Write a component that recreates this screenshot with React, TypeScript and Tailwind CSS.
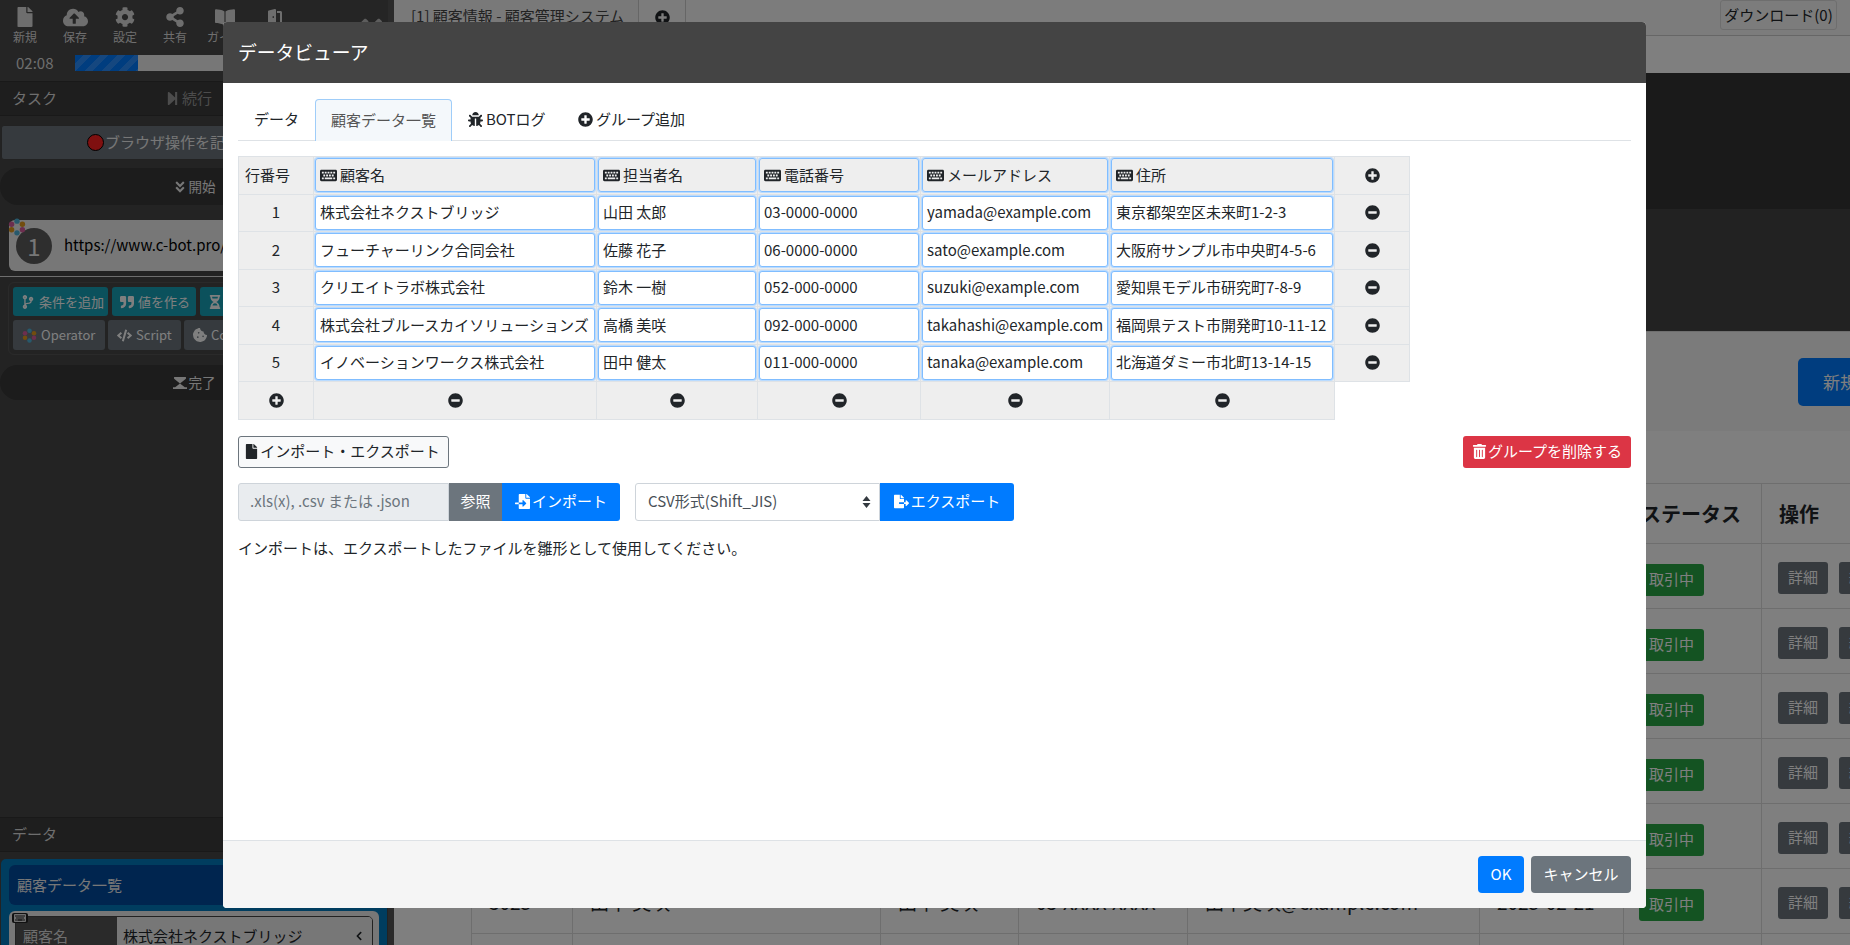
import type { ReactNode } from "react";
import {
  FaAngleDoubleDown,
  FaAngleDoubleLeft,
  FaBookOpen,
  FaBug,
  FaChevronLeft,
  FaCloudUploadAlt,
  FaCode,
  FaCodeBranch,
  FaCog,
  FaCookieBite,
  FaDoorOpen,
  FaFile,
  FaFileExport,
  FaFileImport,
  FaHourglassHalf,
  FaKeyboard,
  FaMinusCircle,
  FaPlusCircle,
  FaQuoteRight,
  FaShareAlt,
  FaStepForward,
  FaTrashAlt,
} from "react-icons/fa";

const customers = [
  ["株式会社ネクストブリッジ", "山田 太郎", "03-0000-0000", "yamada@example.com", "東京都架空区未来町1-2-3"],
  ["フューチャーリンク合同会社", "佐藤 花子", "06-0000-0000", "sato@example.com", "大阪府サンプル市中央町4-5-6"],
  ["クリエイトラボ株式会社", "鈴木 一樹", "052-000-0000", "suzuki@example.com", "愛知県モデル市研究町7-8-9"],
  ["株式会社ブルースカイソリューションズ", "高橋 美咲", "092-000-0000", "takahashi@example.com", "福岡県テスト市開発町10-11-12"],
  ["イノベーションワークス株式会社", "田中 健太", "011-000-0000", "tanaka@example.com", "北海道ダミー市北町13-14-15"],
];

const columns = ["顧客名", "担当者名", "電話番号", "メールアドレス", "住所"];

const toolbar = [
  { label: "新規", icon: <FaFile /> },
  { label: "保存", icon: <FaCloudUploadAlt className="text-[25px]" /> },
  { label: "設定", icon: <FaCog /> },
  { label: "共有", icon: <FaShareAlt /> },
  { label: "ガイド", icon: <FaBookOpen /> },
  { label: "終了", icon: <FaDoorOpen /> },
];

const backRows = ["3020", "3021", "3022", "3023", "3024", "3025"];

function OperatorLogo({ size }: { size: number }) {
  return (
    <svg width={size} height={size} viewBox="0 0 20 20" className="shrink-0">
      <circle cx="10" cy="3.5" r="3" fill="#4fb3d9" />
      <circle cx="16" cy="7" r="3" fill="#e59a1c" />
      <circle cx="16" cy="13" r="3" fill="#d85c9c" />
      <circle cx="10" cy="16.5" r="3" fill="#4fb3d9" />
      <circle cx="4" cy="13" r="3" fill="#e59a1c" />
      <circle cx="4" cy="7" r="3" fill="#d85c9c" />
    </svg>
  );
}

function TealButton({ icon, children, width }: { icon: ReactNode; children: ReactNode; width: string }) {
  return (
    <div className={`${width} flex h-[29px] shrink-0 items-center gap-[4px] rounded-[3px] bg-[#17a2b8] pl-[8px] text-[13px] text-white`}>
      {icon}
      <span>{children}</span>
    </div>
  );
}

function GreyButton({ icon, children, width }: { icon: ReactNode; children: ReactNode; width: string }) {
  return (
    <div className={`${width} flex h-[30px] shrink-0 items-center gap-[4px] rounded-[3px] bg-[#6c757d] pl-[9px] text-[13px] text-white`}>
      {icon}
      <span>{children}</span>
    </div>
  );
}

function Sidebar() {
  return (
    <aside className="flex h-full w-[394px] shrink-0 flex-col overflow-hidden border-r-[6px] border-[#555] bg-[#474747] text-white">
      <div className="flex h-[82px] shrink-0 flex-col border-b border-[#333] bg-[#4a4a4a]">
        <div className="flex h-[52px] shrink-0 pt-[6px]">
          {toolbar.map((t) => (
            <div key={t.label} className="flex w-[50px] shrink-0 flex-col items-center text-[#ddd]">
              <div className="flex h-[22px] items-center text-[20px]">{t.icon}</div>
              <span className="mt-px text-[12px] leading-[16px]">{t.label}</span>
            </div>
          ))}
          <div className="ml-[50px] mt-[6px] text-[36px] leading-none text-[#bbb]">
            <FaAngleDoubleLeft />
          </div>
        </div>
        <div className="flex h-[22px] items-center pl-[16px]">
          <span className="w-[59px] text-[15px] text-[#ddd]">02:08</span>
          <div className="h-[16px] w-[300px] bg-[#eee]">
            <div className="h-full w-[63px] bg-[repeating-linear-gradient(135deg,#007bff_0,#007bff_6px,#2a8fff_6px,#2a8fff_12px)]" />
          </div>
        </div>
      </div>
      <div className="flex h-[34px] shrink-0 items-center border-b border-[#333] bg-[#3c3c3c] pl-[12px] text-[15px] text-[#ddd]">
        <span className="w-[153px]">タスク</span>
        <span className="flex items-center gap-[2px] text-[#999]">
          <FaStepForward className="text-[15px]" />
          続行
        </span>
      </div>
      <div className="mx-px mt-[9px] flex h-[35px] shrink-0 items-center rounded-[3px] border border-[#444] bg-[#6c757d] pl-[85px] text-[15px] text-[#eee]">
        <span className="mr-px h-[17px] w-[17px] rounded-full border border-black bg-[#ff2020]" />
        ブラウザ操作を記録
      </div>
      <div className="mt-[8px] flex h-[37px] shrink-0 items-center justify-center gap-[2px] rounded-[18px] bg-[#383838] text-[13.5px] text-[#eee]">
        <FaAngleDoubleDown className="text-[14px]" />
        開始
      </div>
      <div className="relative mx-[9px] mt-[15px] flex h-[51px] shrink-0 items-center rounded-[6px] bg-[#eee] pl-[7px]">
        <div className="flex h-[36px] w-[36px] items-center justify-center rounded-full bg-[#5c5c5c] text-[24px] text-[#eee]">1</div>
        <span className="ml-[12px] text-[15px] text-black">https://www.c-bot.pro/</span>
        <div className="absolute -left-px -top-[2px]">
          <OperatorLogo size={18} />
        </div>
      </div>
      <div className="mt-[5px] h-px shrink-0 bg-[#ddd]" />
      <div className="mx-[8px] mt-[5px] flex h-[73px] shrink-0 flex-col gap-[4px] rounded-[6px] border border-[#555] px-[4px] pt-[4px]">
        <div className="flex gap-1">
          <TealButton width="w-[95px]" icon={<FaCodeBranch className="text-[14px]" />}>条件を追加</TealButton>
          <TealButton width="w-[84px]" icon={<FaQuoteRight className="text-[14px]" />}>値を作る</TealButton>
          <TealButton width="w-[85px]" icon={<FaHourglassHalf className="text-[14px]" />}>待機</TealButton>
        </div>
        <div className="flex gap-[3px]">
          <GreyButton width="w-[92px]" icon={<OperatorLogo size={15} />}>Operator</GreyButton>
          <GreyButton width="w-[73px]" icon={<FaCode className="text-[15px]" />}>Script</GreyButton>
          <GreyButton width="w-[85px]" icon={<FaCookieBite className="text-[14px]" />}>Cookie</GreyButton>
        </div>
      </div>
      <div className="mt-[10px] flex h-[35px] shrink-0 items-center justify-center gap-[2px] rounded-[18px] bg-[#383838] text-[13.5px] text-[#eee]">
        <svg width="14" height="12" viewBox="0 0 13 11" fill="currentColor">
          <path d="M1 0h11v1.5L6.5 6 1 1.5zM0 9.5h13V11H0zM6.5 6l4.5 3.5H2z" />
        </svg>
        完了
      </div>
      <div className="flex-1" />
      <div className="flex h-[35px] shrink-0 items-center border-y border-[#333] bg-[#3c3c3c] pl-[12px] text-[15px] text-[#ddd]">データ</div>
      <div className="mx-px mt-[7px] h-[86px] shrink-0 rounded-t-[5px] bg-[#007bbf] px-[8px] pt-[6px]">
        <div className="flex h-[40px] items-center rounded-[6px] bg-[#004a9f] pl-[8px] text-[15px] text-[#eee]">顧客データ一覧</div>
        <div className="relative mt-[6px] h-[40px] rounded-t-[6px] bg-[#eee] px-[6px] pt-[5px] text-[15px]">
          <div className="flex h-[32px] overflow-hidden rounded-t-[5px] border border-[#444]">
            <div className="w-[101px] bg-[#555] pl-[7px] pt-[8px] text-[#ddd]">顧客名</div>
            <div className="flex flex-1 items-start justify-between bg-[#eee] pl-[6px] pr-[8px] pt-[8px] text-[#212529]">
              株式会社ネクストブリッジ
              <FaChevronLeft className="mt-[6px] text-[10px]" />
            </div>
          </div>
          <div className="absolute left-[3px] top-[2px] flex h-[10px] w-[16px] items-center justify-center rounded-[2px] bg-[#222] text-[12px] text-[#ddd]">
            <FaKeyboard />
          </div>
        </div>
      </div>
    </aside>
  );
}

function BackPage() {
  return (
    <main className="flex h-full min-w-0 flex-1 flex-col overflow-hidden bg-white text-[#212529]">
      <div className="flex h-[36px] shrink-0 border-b border-[#ccc] bg-[#f8f8f8]">
        <div className="w-[245px] border-r border-[#ccc] bg-[#f2f2f2] pl-[17px] pt-[5px] text-[15px] text-[#444]">[1] 顧客情報 - 顧客管理システム</div>
        <div className="flex w-[47px] items-start justify-center border-r border-[#ccc] pt-[10px] text-[15px]">
          <FaPlusCircle />
        </div>
        <div className="flex-1" />
        <div className="mr-[13px] flex h-[30px] w-[117px] items-center justify-center rounded-[3px] border border-[#ddd] text-[15px]">ダウンロード(0)</div>
      </div>
      <div className="h-[37px] shrink-0 bg-white" />
      <div className="h-[136px] shrink-0 bg-[#343434]" />
      <div className="h-[123px] shrink-0 border-b border-[#ddd] bg-[#444]" />
      <div className="flex h-[99px] shrink-0 items-start justify-end bg-[#f6f6f6] pt-[26px]">
        <div className="mr-[-50px] flex h-[48px] w-[102px] items-center rounded-[5px] bg-[#007bff] pl-[25px] text-[17px] text-white">新規作成</div>
      </div>
      <div className="h-[52px] shrink-0 bg-white" />
      <div className="pl-[77px]">
        <table className="w-[1500px] table-fixed border-collapse text-[19px]">
          <colgroup>
            <col className="w-[101px]" />
            <col className="w-[308px]" />
            <col className="w-[138px]" />
            <col className="w-[169px]" />
            <col className="w-[292px]" />
            <col className="w-[144px]" />
            <col className="w-[138px]" />
            <col />
          </colgroup>
          <thead>
            <tr className="h-[60px] font-bold">
              {["顧客ID", "顧客名", "担当者", "電話番号", "メールアドレス", "登録日", "ステータス", "操作"].map((h) => (
                <th key={h} className="border border-[#ddd] px-[17px] text-left text-[20px]">{h}</th>
              ))}
            </tr>
          </thead>
          <tbody>
            {backRows.map((id) => (
              <tr key={id} className="h-[65px]">
                <td className="border border-[#ddd] px-[17px] pt-[3px]">{id}</td>
                <td className="border border-[#ddd] px-[17px] pt-[3px]">田中 美咲</td>
                <td className="border border-[#ddd] px-[17px] pt-[3px]">田中 美咲</td>
                <td className="overflow-hidden whitespace-nowrap border border-[#ddd] px-[17px] pt-[3px]">03-XXXX-XXXX</td>
                <td className="border border-[#ddd] px-[17px] pt-[3px]">田中美咲@example.com</td>
                <td className="border border-[#ddd] px-[17px] pt-[3px]">2025-02-21</td>
                <td className="border border-[#ddd] pl-[15px] pt-[7px]">
                  <span className="flex h-[32px] w-[65px] items-center justify-center rounded-[3px] bg-[#28a745] text-[15px] text-white">取引中</span>
                </td>
                <td className="border border-[#ddd] pl-[16px] pt-[3px]">
                  <div className="flex gap-[11px]">
                    <span className="flex h-[32px] w-[50px] items-center justify-center rounded-[3px] bg-[#6c757d] text-[15px] text-white">詳細</span>
                    <span className="flex h-[32px] w-[50px] items-center justify-center rounded-[3px] bg-[#6c757d] text-[15px] text-white">編集</span>
                  </div>
                </td>
              </tr>
            ))}
            <tr className="h-[65px]">
              {Array.from({ length: 8 }).map((_, i) => (
                <td key={i} className="border border-[#ddd]" />
              ))}
            </tr>
          </tbody>
        </table>
      </div>
    </main>
  );
}

function CellBox({ children }: { children: ReactNode }) {
  return (
    <div className="flex h-[34px] items-center overflow-hidden whitespace-nowrap rounded-[3px] border border-[#80bdff] bg-white pb-px pl-[4px] shadow-[0_0_0_1px_#b9dbff]">
      {children}
    </div>
  );
}

function DataTable() {
  return (
    <table className="w-[1171px] table-fixed border-collapse text-[15px] text-[#212529]">
      <colgroup>
        <col className="w-[75px]" />
        <col className="w-[283px]" />
        <col className="w-[161px]" />
        <col className="w-[163px]" />
        <col className="w-[189px]" />
        <col className="w-[225px]" />
        <col className="w-[75px]" />
      </colgroup>
      <tbody>
        <tr className="h-[37.5px]">
          <td className="border border-[#dee2e6] bg-[#eee] pl-[6px] text-left">行番号</td>
          {columns.map((c) => (
            <td key={c} className="border border-[#dee2e6] bg-[#eee] p-px">
              <div className="flex h-[34px] items-center gap-[3px] rounded-[3px] border border-[#80bdff] pl-[4px] shadow-[0_0_0_1px_#b9dbff]">
                <FaKeyboard className="text-[17px]" />
                {c}
              </div>
            </td>
          ))}
          <td className="border border-[#dee2e6] bg-[#eee]">
            <FaPlusCircle className="mx-auto text-[15px]" />
          </td>
        </tr>
        {customers.map((row, i) => (
          <tr key={row[0]} className="h-[37.5px]">
            <td className="border border-[#dee2e6] bg-[#eee] pb-px text-center">{i + 1}</td>
            {row.map((v) => (
              <td key={v} className="border border-[#dee2e6] bg-[#eee] p-px">
                <CellBox>{v}</CellBox>
              </td>
            ))}
            <td className="border border-[#dee2e6] bg-[#eee]">
              <FaMinusCircle className="mx-auto text-[15px]" />
            </td>
          </tr>
        ))}
        <tr className="h-[37.5px]">
          <td className="border border-[#dee2e6] bg-[#eee]">
            <FaPlusCircle className="mx-auto text-[15px]" />
          </td>
          {columns.map((c) => (
            <td key={c} className="border border-[#dee2e6] bg-[#eee]">
              <FaMinusCircle className="mx-auto text-[15px]" />
            </td>
          ))}
        </tr>
      </tbody>
    </table>
  );
}

function DataViewerModal() {
  return (
    <div className="absolute left-[223px] top-[22px] flex h-[886px] w-[1423px] flex-col overflow-hidden rounded-[4px] bg-white text-[15px] text-[#212529]">
      <div className="flex h-[61px] shrink-0 items-center bg-[#444] pl-[15px] text-[18.75px] text-white">データビューア</div>
      <div className="flex-1 px-[15px] pt-[16px]">
        <div className="flex h-[42px] items-end border-b border-[#dee2e6]">
          <div className="flex h-[41px] w-[77px] items-center justify-center">データ</div>
          <div className="-mb-px flex h-[42px] w-[137px] items-center justify-center rounded-t-[4px] border border-b-0 border-[#9fcdf9] bg-[#f4f8fb] text-[#555]">顧客データ一覧</div>
          <div className="flex h-[41px] w-[126px] items-center pl-[16px]">
            <FaBug className="mr-[3px] text-[15px]" />
            BOTログ
          </div>
          <div className="flex h-[41px] items-center">
            <FaPlusCircle className="mr-[3px] text-[15px]" />
            グループ追加
          </div>
        </div>
        <div className="mt-[15px]">
          <DataTable />
        </div>
        <div className="mt-[16px] flex items-start justify-between">
          <div className="flex h-[32px] w-[211px] items-center justify-center rounded-[3px] border border-[#6c757d] bg-[#f8f9fa] pr-[3px]">
            <FaFile className="mr-[1px] text-[15px]" />
            インポート・エクスポート
          </div>
          <div className="flex h-[32px] w-[168px] items-center justify-center rounded-[3px] bg-[#dc3545] text-white">
            <FaTrashAlt className="mr-[1px] text-[15px]" />
            グループを削除する
          </div>
        </div>
        <div className="mt-[15px] flex h-[38px]">
          <div className="flex w-[211px] items-center rounded-l-[3px] border border-[#ced4da] bg-[#e9ecef] pl-[11px] text-[#6c757d]">.xls(x), .csv または .json</div>
          <div className="flex w-[53px] items-center justify-center bg-[#6c757d] text-white">参照</div>
          <div className="flex w-[118px] items-center justify-center rounded-r-[3px] bg-[#007bff] text-white">
            <FaFileImport className="mr-[2px] text-[15px]" />
            インポート
          </div>
          <div className="ml-[15px] flex w-[245px] items-center justify-between rounded-l-[3px] border border-[#ced4da] pl-[12px] pr-[8px] text-[#495057]">
            CSV形式(Shift_JIS)
            <svg width="9" height="14" viewBox="0 0 9 14" fill="#343a40">
              <path d="M4.5 1 8.5 6H.5zM4.5 13 .5 8h8z" />
            </svg>
          </div>
          <div className="flex w-[134px] items-center justify-center rounded-r-[3px] bg-[#007bff] text-white">
            <FaFileExport className="mr-[2px] text-[15px]" />
            エクスポート
          </div>
        </div>
        <p className="mt-[16px]">インポートは、エクスポートしたファイルを雛形として使用してください。</p>
      </div>
      <div className="flex h-[68px] shrink-0 items-start justify-end gap-[7px] border-t border-[#dee2e6] bg-[#f5f5f5] pr-[15px] pt-[15px] text-white">
        <div className="flex h-[37px] w-[46px] items-center justify-center rounded-[4px] bg-[#007bff]">OK</div>
        <div className="flex h-[37px] w-[100px] items-center justify-center rounded-[4px] bg-[#6c757d]">キャンセル</div>
      </div>
    </div>
  );
}

export default function App() {
  return (
    <div className="relative flex h-[945px] w-[1850px] overflow-hidden font-['Noto_Sans_CJK_JP','Noto_Sans',sans-serif]">
      <Sidebar />
      <BackPage />
      <div className="absolute inset-0 bg-black/50" />
      <DataViewerModal />
    </div>
  );
}
